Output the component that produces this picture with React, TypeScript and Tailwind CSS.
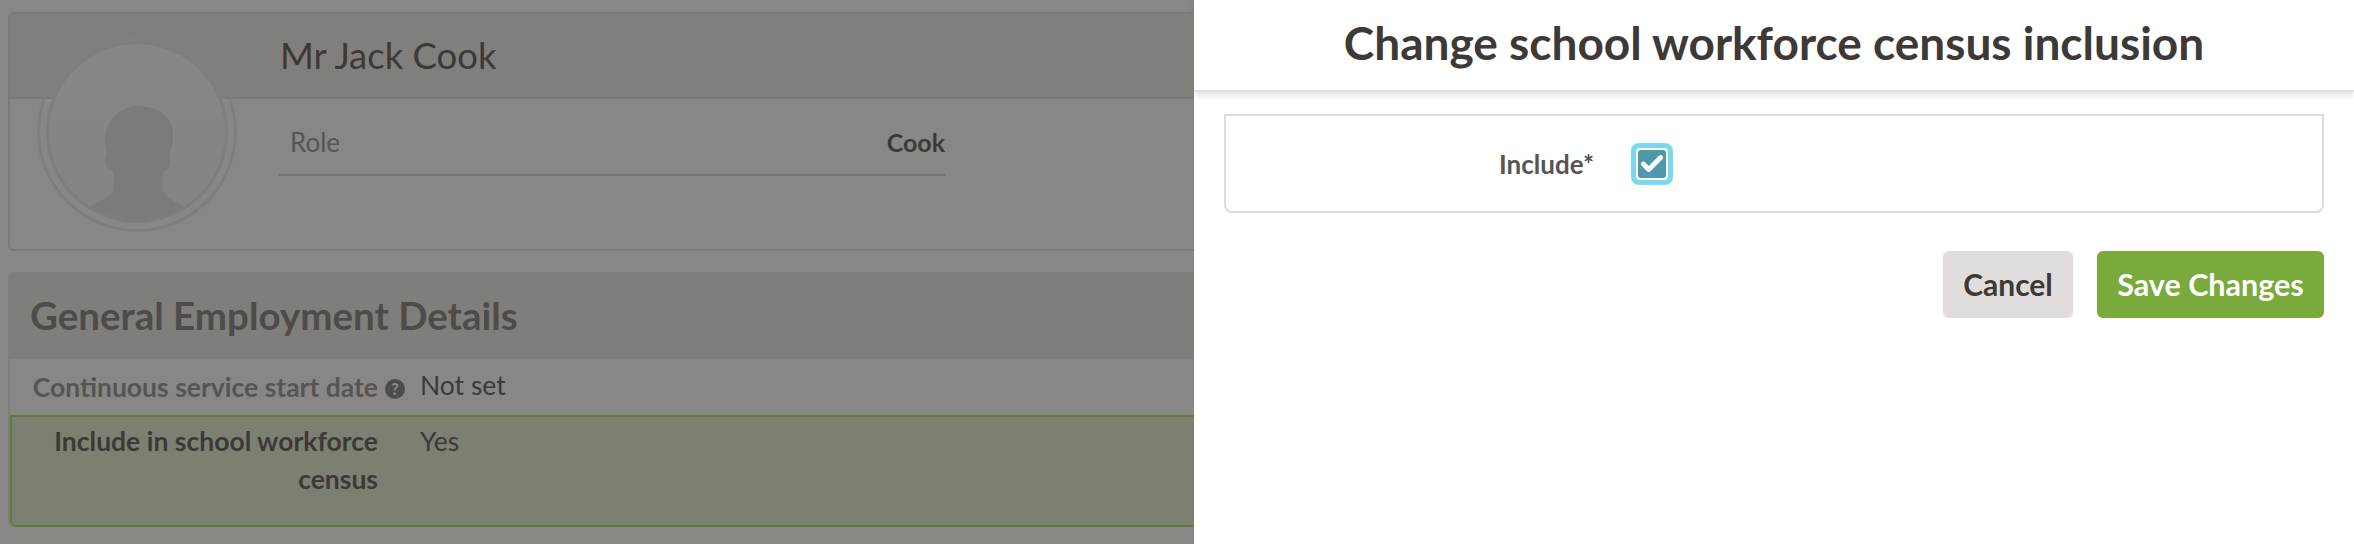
import React from 'react';
import { Check } from 'lucide-react';

const Avatar: React.FC = () => (
  <div className="absolute left-[27px] top-[18px] w-[200px] h-[200px] rounded-full border-[3px] border-[#7f7e7b] p-[6px]">
    <div className="w-full h-full rounded-full border-[3px] border-[#7f7e7b] bg-gradient-to-b from-[#888785] to-[#858482] overflow-hidden">
      <svg viewBox="0 0 182 182" className="w-full h-full block">
        <path
          d="M91 64C76 64 59 78 58 95C57 105 60 110 59 114C57 118 58 128 63 130L67 133L67 150C65 158 51 163 41 169L41 182L141 182L141 169C131 163 119 158 117 150L118 133L123 130C126 125 125 118 125 112C129 102 130 90 125 80C119 70 106 64 91 64Z"
          fill="#7c7b79"
        />
      </svg>
    </div>
  </div>
);

const App: React.FC = () => {
  return (
    <div className="flex w-[2354px] h-[544px] overflow-hidden font-['Lato','Liberation_Sans',sans-serif] text-[#3d3937]">
      {/* Dimmed page behind the drawer */}
      <div className="w-[1194px] shrink-0 bg-[#888785] pl-2 pt-3 overflow-hidden">
        <div className="relative w-[1400px] h-[239px] rounded-md border-2 border-[#7b7a78]">
          <div className="h-[85px] border-b-2 border-[#7b7a78] bg-[#807f7c] pl-[270px] pt-[19px] text-[36.5px] leading-[44px]">
            Mr Jack Cook
          </div>
          <div className="ml-[269px] mt-[26px] flex h-[51px] w-[666px] items-start justify-between border-b-2 border-[#74736f] pl-[11px] text-[26px] leading-[34px]">
            <span className="text-[#575452]">Role</span>
            <span className="text-[25px] font-bold">Cook</span>
          </div>
          <Avatar />
        </div>

        <div className="mt-[21px] w-[1400px] rounded-md border-2 border-b-0 border-[#7f7e7b]">
          <div className="h-[85px] border-b-2 border-[#7f7e7b] bg-[#7f7e7b] pl-5 pt-[19px] text-[38.5px] font-bold leading-[44px] text-[#4f4b49]">
            General Employment Details
          </div>
          <div className="grid h-[56px] grid-cols-[368px_1fr] text-[26.5px] leading-[38px]">
            <div className="relative flex items-start justify-end pt-[9px] text-[#575452] font-bold">
              <span>Continuous service start date</span>
              <span className="absolute -right-[27px] top-[20px] flex h-[20px] w-[20px] items-center justify-center rounded-full bg-[#4f4b49] text-[16px] font-black leading-none text-[#888785]">?</span>
            </div>
            <div className="pl-[42px] pt-[7px]">Not set</div>
          </div>
          <div className="grid h-[112px] grid-cols-[366px_1fr] rounded-b-md border-2 border-[#5f7a3c] bg-[#7c8070] text-[26.5px] leading-[38px]">
            <div className="pt-[5px] text-right font-bold">
              Include in school workforce census
            </div>
            <div className="pl-[42px] pt-[5px]">Yes</div>
          </div>
        </div>
      </div>

      {/* Drawer */}
      <div className="flex-1 bg-white">
        <div className="h-[92px] border-b-2 border-[#e2e0df] text-center text-[46px] font-bold leading-[86px] shadow-[0_4px_6px_rgba(0,0,0,0.1)]">
          Change school workforce census inclusion
        </div>
        <div className="ml-[30px] mt-[22px] mr-[30px] flex h-[99px] items-center rounded-b-lg border-2 border-[#dedcdb]">
          <div className="w-[370px] pr-[2px] pt-[2px] text-right text-[26px] font-bold text-[#575452]">Include*</div>
          <div className="ml-[35px] flex h-[42px] w-[42px] items-center justify-center rounded-lg bg-[#7ad7f0] p-[5px]">
            <div className="rounded-[4px] border-2 border-white bg-white p-0">
              <div className="flex h-[28px] w-[28px] items-center justify-center rounded-[3px] bg-[#5097ab]">
                <Check size={26} strokeWidth={4.5} className="text-white" />
              </div>
            </div>
          </div>
        </div>
        <div className="mr-[30px] mt-[38px] flex justify-end gap-6">
          <button className="h-[67px] w-[130px] rounded-md bg-[#e0dddc] text-[30px] font-bold">Cancel</button>
          <button className="h-[67px] w-[227px] rounded-md bg-[#7aa93c] text-[30.5px] font-bold text-white">Save Changes</button>
        </div>
      </div>
    </div>
  );
};

export default App;
